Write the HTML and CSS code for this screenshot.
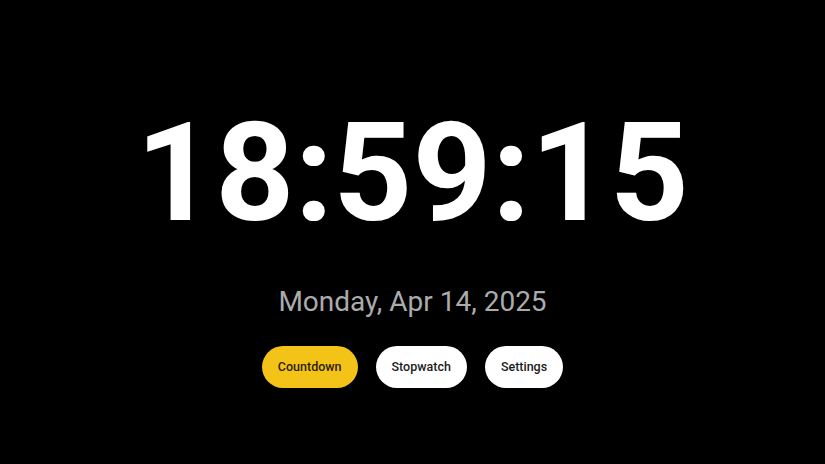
FILE: index.html
```html
<!DOCTYPE html>
<html>
<head>
<meta charset="utf-8">
<link rel="stylesheet" href="styles.css">
</head>
<body>
<main class="screen">
  <div class="clock">18:59:15</div>
  <div class="date">Monday, Apr 14, 2025</div>
  <nav class="actions">
    <button class="btn btn-primary">Countdown</button>
    <button class="btn">Stopwatch</button>
    <button class="btn">Settings</button>
  </nav>
</main>
</body>
</html>
```
FILE: styles.css
```css
html, body {
  margin: 0;
  padding: 0;
  background: #000;
  height: 100%;
}
.screen {
  box-sizing: border-box;
  height: 464px;
  display: flex;
  flex-direction: column;
  align-items: center;
  padding-top: 104px;
  font-family: Roboto, "Liberation Sans", sans-serif;
}
.clock {
  font-size: 138px;
  font-weight: 700;
  line-height: 1;
  color: #fff;
}
.date {
  margin-top: 43px;
  font-size: 28px;
  line-height: 1.2;
  font-weight: 400;
  color: #ababab;
}
.actions {
  margin-top: 27px;
  display: flex;
  gap: 18px;
}
.btn {
  font-family: Roboto, "Liberation Sans", sans-serif;
  height: 42px;
  padding: 0 16px;
  border: none;
  border-radius: 21px;
  background: #fff;
  color: #1c1c1c;
  font-size: 12.5px;
  font-weight: 500;
  cursor: pointer;
}
.btn-primary {
  background: #f4c317;
  color: #2a2100;
}
```
